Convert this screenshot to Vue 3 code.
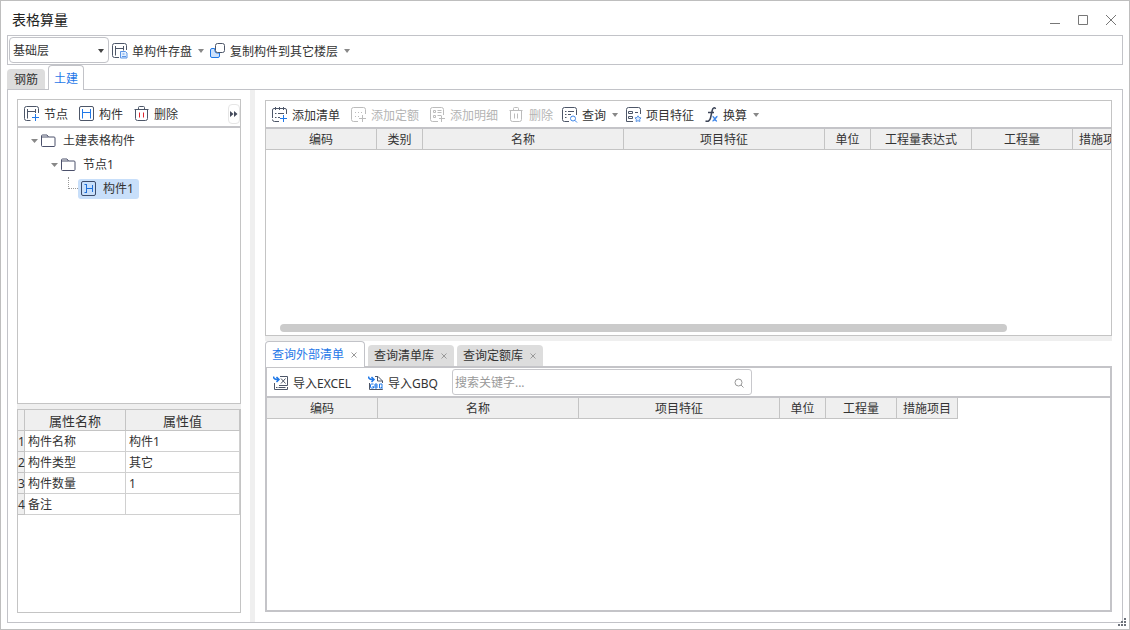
<script setup>
import { ref } from 'vue'

const floor = ref('基础层')
const keyword = ref('')
const leftTools = [
  { icon: 'node', label: '节点' },
  { icon: 'part', label: '构件' },
  { icon: 'trash-red', label: '删除' },
]
const listTools = [
  { icon: 'add-list', label: '添加清单' },
  { icon: 'add-quota', label: '添加定额', disabled: true },
  { icon: 'add-detail', label: '添加明细', disabled: true },
  { icon: 'trash', label: '删除', disabled: true, tight: true },
  { icon: 'query', label: '查询', drop: true },
  { icon: 'feature', label: '项目特征', tight: true },
  { icon: 'fx', label: '换算', drop: true },
]
const listColumns = [
  { label: '编码', width: 111 },
  { label: '类别', width: 46 },
  { label: '名称', width: 201 },
  { label: '项目特征', width: 201 },
  { label: '单位', width: 46 },
  { label: '工程量表达式', width: 101 },
  { label: '工程量', width: 101 },
  { label: '措施项目', width: 61 },
]
const queryColumns = [
  { label: '编码', width: 111 },
  { label: '名称', width: 201 },
  { label: '项目特征', width: 201 },
  { label: '单位', width: 46 },
  { label: '工程量', width: 71 },
  { label: '措施项目', width: 61 },
]
const queryTabs = ['查询外部清单', '查询清单库', '查询定额库']
const activeTab = ref('查询外部清单')
const properties = [
  ['构件名称', '构件1'],
  ['构件类型', '其它'],
  ['构件数量', '1'],
  ['备注', ''],
]
const total = (columns) => columns.reduce((sum, c) => sum + c.width, 0)
</script>

<template>
  <div class="window">
    <svg class="defs" aria-hidden="true">
      <symbol id="save" viewBox="0 0 16 16" fill="none">
        <path d="M7 14.5H2.5a2 2 0 0 1-2-2v-10a2 2 0 0 1 2-2h10a2 2 0 0 1 2 2V7M3.5 3v9.5M3.5 5.5h8M11.500 3v4.500" stroke="#4d5668" />
        <path d="M8.500 8.500h5l1.500 1.500v5H8.500z" stroke="#5b95e6" fill="#e3effe" />
        <path d="M10 13.500h4M10.500 11h2" stroke="#5b95e6" />
      </symbol>
      <symbol id="copy" viewBox="0 0 16 16" fill="none">
        <path d="M4.500 5.500H2A1.500 1.500 0 0 0 0.500 7v6A1.500 1.500 0 0 0 2 14.500h6A1.500 1.500 0 0 0 9.500 13V10H7a2 2 0 0 1-2-2z" stroke="#1f78e8" fill="#cfe2fb" />
        <rect x="5.500" y="0.500" width="9" height="9" rx="2" stroke="#4d5668" fill="#fff" />
      </symbol>
      <symbol id="node" viewBox="0 0 16 16" fill="none">
        <path d="M6.500 14.500h-4a2 2 0 0 1-2-2v-10a2 2 0 0 1 2-2h10a2 2 0 0 1 2 2V7M3.500 3v9.500M3.500 5.500h8M11.500 3v4" stroke="#4d5668" />
        <path d="M8 11.500h7M11.500 8v7" stroke="#1f78e8" />
      </symbol>
      <symbol id="part" viewBox="0 0 16 16" fill="none">
        <rect x="0.500" y="0.500" width="14" height="14" rx="1.500" stroke="#4d5668" />
        <path d="M3.500 3v9.500M11.500 3v9.500M3.500 6.500h8" stroke="#1f78e8" />
      </symbol>
      <symbol id="tree-part" viewBox="0 0 16 16" fill="none">
        <rect x="0.500" y="0.500" width="14" height="14" rx="1.500" stroke="#3c4c6b" />
        <path d="M5.500 3v9M3.500 3.500h2M3.500 11.500h2M5.500 7.500h6M11.500 4v7" stroke="#1f6fd8" />
      </symbol>
      <symbol id="trash-red" viewBox="0 0 16 16" fill="none">
        <path d="M0.500 3.500h14M4.500 3V1.500a1 1 0 0 1 1-1h4a1 1 0 0 1 1 1V3M1.500 3.500v9a2 2 0 0 0 2 2h8a2 2 0 0 0 2-2v-9" stroke="#4d5668" />
        <path d="M5.500 6.500v5M9.500 6.500v5" stroke="#e0262f" />
      </symbol>
      <symbol id="trash" viewBox="0 0 16 16" fill="none">
        <path d="M0.500 3.500h13M4.500 3V1.500a1 1 0 0 1 1-1h3a1 1 0 0 1 1 1V3M1.500 3.500v9a2 2 0 0 0 2 2h7a2 2 0 0 0 2-2v-9M5.500 6.500v5M8.500 6.500v5" stroke="#bcbcbc" />
      </symbol>
      <symbol id="add-list" viewBox="0 0 16 16" fill="none">
        <path d="M7 14.500H2.500a2 2 0 0 1-2-2M0.500 11V3a1.500 1.500 0 0 1 1.500-1.500h11A1.500 1.500 0 0 1 14.500 3v4M3.500 0v3M7.500 0v3M11.500 0v3M3 6.500h1.500M6 6.500h6M3 10.500h1.500M6 10.500h2" stroke="#4d5668" />
        <path d="M8 11.500h7M11.500 8v7" stroke="#1f78e8" />
      </symbol>
      <symbol id="add-quota" viewBox="0 0 16 16" fill="none">
        <path d="M7 14.500H2.500a2 2 0 0 1-2-2v-10a2 2 0 0 1 2-2h10a2 2 0 0 1 2 2V7M8 11.500h7M11.500 8v7" stroke="#bcbcbc" />
        <path d="M4 5.500h1M7 5.500h1M10 5.500h1M4 9.500h1M7 9.500h1" stroke="#bcbcbc" />
      </symbol>
      <symbol id="add-detail" viewBox="0 0 16 16" fill="none">
        <path d="M8 14.500H2.500a2 2 0 0 1-2-2v-10a2 2 0 0 1 2-2h9a2 2 0 0 1 2 2V8M9 11.500h6M11.500 9v6M3.500 3.500h2v2h-2zM3.500 8.500h2v2h-2zM7.500 3.500h4M7.500 5.500h4M7.500 8.500h4" stroke="#bcbcbc" />
      </symbol>
      <symbol id="query" viewBox="0 0 16 16" fill="none">
        <path d="M7 14.500H2.500a2 2 0 0 1-2-2v-10a2 2 0 0 1 2-2h10a2 2 0 0 1 2 2V8M3 4.500h1.500M6 4.500h6M3 7.500h1.500M6 7.500h3M3 10.500h1.500" stroke="#4d5668" />
        <path d="M13.500 11.500a2.500 2.500 0 1 1-5 0a2.500 2.500 0 0 1 5 0zM12.800 13.300l2.200 2.200" stroke="#3f87ea" />
      </symbol>
      <symbol id="feature" viewBox="0 0 16 16" fill="none">
        <path d="M7 14.500H0.500v-12a2 2 0 0 1 2-2h10a2 2 0 0 1 2 2V7M2.500 4.500h4v2h-4zM2.500 9.500h4v2h-4zM9 5.500h3" stroke="#4d5668" />
        <path d="M12 8.800l1 1.700 2 .4-1.300 1.500.2 2.100-1.900-.8-1.900.8.200-2.100L9 10.900l2-.4z" stroke="#5b95e6" fill="#dcebff" />
      </symbol>
      <symbol id="fx" viewBox="0 0 16 16" fill="none">
        <path d="M12.500 2C11.800 0 9.800 .6 9.200 3.500L7.500 11C6.800 14 4.800 15 2.500 13.800M5 5.500h6" stroke="#3c4457" stroke-width="1.500" />
        <path d="M9.500 9.500c2-.5 2 5 4.500 4.500M14.500 9.500c-1.800-.2-2.700 4.700-5 4.300" stroke="#3f87ea" stroke-width="1.500" />
      </symbol>
      <symbol id="folder" viewBox="0 0 16 16" fill="none">
        <path d="M1.500 13.500a1 1 0 0 1-1-1v-9.500a1 1 0 0 1 1-1h4.500l1.500 2h5.500a1 1 0 0 1 1 1v7.500a1 1 0 0 1-1 1zM1 4h6.500" stroke="#4b506b" />
      </symbol>
      <symbol id="excel" viewBox="0 0 16 16" fill="none">
        <path d="M7 1.500h7.500v9H6M1.500 8v6.500h13V12M3 12.500h1.500M5.500 12.500h7" stroke="#4d5668" />
        <path d="M8 3.500l4.500 5M12.500 3.500L8 8.500" stroke="#4d5668" />
        <path d="M0.500 1.500c0 2 1.500 3 4.500 3M3.500 2l2.500 2.500L3.500 7" stroke="#1f78e8" stroke-width="1.500" />
      </symbol>
      <symbol id="gbq" viewBox="0 0 16 16" fill="none">
        <path d="M7 1.500h3l4.500 4.500v8.500h-13V8M9.500 1.500V6h5" stroke="#4d5668" />
        <path d="M0.500 1.500c0 2 1.500 3 4.500 3M3.500 2l2.500 2.500L3.500 7" stroke="#1f78e8" stroke-width="1.500" />
        <rect x="2" y="8" width="13" height="6" fill="#fff" />
        <path d="M5.500 9H3.500a1 1 0 0 0-1 1v2a1 1 0 0 0 1 1h2v-1.500H4.500M7 11h2M7 9v4h2V9zM11.500 9h2.500v4h-2.500zM13 12l1.500 1.500" stroke="#1f78e8" />
      </symbol>
    </svg>

    <header class="titlebar">
      <h1>表格算量</h1>
      <div class="controls">
        <button aria-label="最小化"><svg viewBox="0 0 12 12"><path d="M1 9.500h10" /></svg></button>
        <button aria-label="最大化"><svg viewBox="0 0 12 12"><path d="M1.500 1.500h9v9h-9z" /></svg></button>
        <button aria-label="关闭"><svg viewBox="0 0 12 12"><path d="M1 1l10 10M11 1L1 11" /></svg></button>
      </div>
    </header>

    <div class="mainbar">
      <div class="select-wrap">
        <select v-model="floor" aria-label="楼层"><option>基础层</option></select>
        <i class="caret dark"></i>
      </div>
      <button class="tool"><svg class="icon"><use href="#save" /></svg><span>单构件存盘</span><i class="caret"></i></button>
      <button class="tool"><svg class="icon"><use href="#copy" /></svg><span>复制构件到其它楼层</span><i class="caret"></i></button>
    </div>

    <nav class="page-tabs">
      <button>钢筋</button>
      <button class="active">土建</button>
    </nav>

    <main class="workspace">
      <aside class="left">
        <section class="tree-pane">
          <div class="toolbar">
            <button v-for="t in leftTools" :key="t.icon" class="tool">
              <svg class="icon"><use :href="'#' + t.icon" /></svg><span>{{ t.label }}</span>
            </button>
            <button class="more" aria-label="更多"><svg viewBox="0 0 8 6"><path d="M0 0l3.500 3L0 6zM4 0l3.500 3L4 6z" /></svg></button>
          </div>
          <ul class="tree">
            <li>
              <div class="row"><i class="caret wide"></i><svg class="icon"><use href="#folder" /></svg><span>土建表格构件</span></div>
              <ul>
                <li>
                  <div class="row"><i class="caret wide"></i><svg class="icon"><use href="#folder" /></svg><span>节点1</span></div>
                  <ul>
                    <li>
                      <div class="row">
                        <i class="branch"></i>
                        <div class="selected"><svg class="icon"><use href="#tree-part" /></svg><span>构件1</span></div>
                      </div>
                    </li>
                  </ul>
                </li>
              </ul>
            </li>
          </ul>
        </section>
        <div class="hsplit"></div>
        <section class="props-pane">
          <table class="props">
            <colgroup><col class="c-num" /><col class="c-name" /><col /></colgroup>
            <thead><tr><th></th><th>属性名称</th><th>属性值</th></tr></thead>
            <tbody>
              <tr v-for="(p, i) in properties" :key="p[0]">
                <th>{{ i + 1 }}</th><td>{{ p[0] }}</td><td>{{ p[1] }}</td>
              </tr>
            </tbody>
          </table>
        </section>
      </aside>

      <div class="vsplit"></div>

      <div class="right">
        <section class="list-pane">
          <div class="toolbar">
            <button v-for="t in listTools" :key="t.icon" class="tool" :class="{ tight: t.tight }" :disabled="t.disabled">
              <svg class="icon"><use :href="'#' + t.icon" /></svg><span>{{ t.label }}</span><i v-if="t.drop" class="caret"></i>
            </button>
          </div>
          <table class="grid" :style="{ width: total(listColumns) + 'px' }">
            <thead>
              <tr><th v-for="c in listColumns" :key="c.label" :style="{ width: c.width + 'px' }">{{ c.label }}</th></tr>
            </thead>
          </table>
          <div class="scroll-thumb"></div>
        </section>
        <div class="hsplit"></div>
        <nav class="query-tabs">
          <button v-for="t in queryTabs" :key="t" :class="{ active: t === activeTab }" @click="activeTab = t">
            {{ t }}<svg viewBox="0 0 6 6"><path d="M0.500 0.500l5 5M5.500 0.500l-5 5" /></svg>
          </button>
        </nav>
        <section class="query-pane">
          <div class="toolbar">
            <button class="tool"><svg class="icon"><use href="#excel" /></svg><span>导入EXCEL</span></button>
            <button class="tool"><svg class="icon"><use href="#gbq" /></svg><span>导入GBQ</span></button>
            <div class="search">
              <input v-model="keyword" type="text" aria-label="搜索关键字" placeholder="搜索关键字..." />
              <svg viewBox="0 0 10 10"><circle cx="4.500" cy="4.500" r="3.500" /><path d="M7 7l2.500 2.500" /></svg>
            </div>
          </div>
          <table class="grid" :style="{ width: total(queryColumns) + 'px' }">
            <thead>
              <tr><th v-for="c in queryColumns" :key="c.label" :style="{ width: c.width + 'px' }">{{ c.label }}</th></tr>
            </thead>
          </table>
        </section>
      </div>
    </main>
    <svg class="grip" viewBox="0 0 8 8"><path d="M6 0h2v2H6zM3 3h2v2H3zM6 3h2v2H6zM0 6h2v2H0zM3 6h2v2H3zM6 6h2v2H6z" /></svg>
  </div>
</template>

<style>
body { background: #fff; }
</style>

<style scoped>
* { box-sizing: border-box; }
.window {
  position: relative;
  display: flex;
  flex-direction: column;
  min-height: 100vh;
  padding: 0 6px 6px;
  border: 1px solid #bebebe;
  background: #fff;
  color: #333;
  font: 12px/16px "Noto Sans", "Noto Sans CJK SC", sans-serif;
}
.defs { position: absolute; width: 0; height: 0; }
button {
  margin: 0;
  padding: 0;
  border: 0;
  background: none;
  color: inherit;
  font: inherit;
  white-space: nowrap;
}
ul { margin: 0; padding: 0; list-style: none; }
.icon { width: 16px; height: 16px; flex: none; }
.titlebar {
  display: flex;
  justify-content: space-between;
  align-items: center;
  height: 34px;
  padding: 3px 6px 0 5px;
}
h1 { margin: 0; font-size: 14px; font-weight: 400; line-height: 20px; color: #222; }
.controls { display: flex; gap: 16px; }
.controls svg { display: block; width: 12px; height: 12px; fill: none; stroke: #777; }
.mainbar {
  display: flex;
  align-items: center;
  height: 30px;
  padding: 2px 0 0 1px;
  border: 1px solid #c2c3c8;
}
.select-wrap { position: relative; align-self: flex-start; width: 100px; margin: -1px 3px 0 0; }
select {
  display: block;
  width: 100%;
  height: 26px;
  padding: 1px 3px 0;
  border: 1px solid #c2c3c8;
  border-radius: 4px;
  background: #fff;
  color: #333;
  font: inherit;
  appearance: none;
}
.caret {
  flex: none;
  width: 6px;
  height: 4px;
  margin-left: 2px;
  background: #888;
  clip-path: polygon(0 0, 100% 0, 50% 100%);
}
.caret.dark { position: absolute; right: 5px; top: 12px; background: #444; }
.caret.wide { width: 7px; height: 4px; margin: 0 3px 0 0; }
.tool { display: flex; align-items: center; gap: 4px; }
.tool span { padding-top: 2px; }
.mainbar .tool { margin-right: 6px; }
.page-tabs { display: flex; align-items: flex-end; height: 24px; }
.page-tabs button {
  width: 38px;
  height: 20px;
  padding-top: 2px;
  border-radius: 4px 4px 0 0;
  background: #ddd;
}
.page-tabs .active {
  z-index: 1;
  width: 36px;
  height: 25px;
  margin: 0 0 -1px 3px;
  border: 1px solid #c2c3c8;
  border-bottom: 0;
  background: #fff;
  color: #1f78e8;
}
.workspace {
  flex: 1;
  display: flex;
  border: 1px solid #c2c3c8;
}
.left {
  display: flex;
  flex-direction: column;
  flex: none;
  width: 224px;
  margin: 9px;
}
.vsplit { flex: none; width: 5px; background: #efefef; }
.hsplit { flex: none; height: 5px; background: #efefef; }
.right {
  flex: 1;
  display: flex;
  flex-direction: column;
  min-width: 0;
  margin: 10px;
}
.tree-pane { flex: 1; border: 1px solid #c4c4c4; }
.toolbar {
  display: flex;
  align-items: center;
  height: 28px;
  padding: 2px 0 0 6px;
  border-bottom: 2px solid #c4c4c8;
}
.left .tool { margin-right: 11px; }
.more {
  width: 12px;
  height: 20px;
  margin-left: auto;
  border: 1px solid #e6e6e6;
  border-radius: 4px;
}
.more svg { display: block; width: 8px; height: 6px; margin-left: 1px; fill: #444b5c; }
.tree { padding: 1px 0 0 13px; }
.tree ul { padding-left: 20px; }
.row { display: flex; align-items: center; height: 24px; }
.row span { margin-left: 6px; }
.branch {
  width: 10px;
  height: 12px;
  margin: 0 0 12px -3px;
  border: 1px dotted #999;
  border-width: 0 0 1px 1px;
}
.selected {
  display: flex;
  align-items: center;
  height: 20px;
  padding: 0 5px 0 3px;
  border-radius: 3px;
  background: #c8dffa;
}
.props-pane { height: 204px; border: 1px solid #c4c4c4; }
table { border-collapse: separate; border-spacing: 0; table-layout: fixed; }
.props { width: 100%; }
.c-num { width: 7px; }
.c-name { width: 101px; }
.props th, .props td {
  height: 21px;
  padding: 2px 0 0 3px;
  border: solid #d0d0d0;
  border-width: 0 1px 1px 0;
  text-align: left;
  font-weight: 400;
  white-space: nowrap;
}
.props th { padding-left: 0; border-color: #c4c4c4; background: #efefef; }
.props thead th { text-align: center; font-size: 13px; }
.list-pane {
  display: flex;
  flex-direction: column;
  flex: none;
  height: 236px;
  border: 1px solid #c4c4c4;
  overflow: hidden;
}
.right .tool { margin-right: 11px; }
.right .tight { margin-right: 9px; }
.right .tool:has(.caret) { margin-right: 8px; }
.tool:disabled { color: #b4b4b4; }
.grid th {
  height: 21px;
  padding: 2px 0 0;
  border: solid #c4c4c4;
  border-width: 0 1px 1px 0;
  background: #efefef;
  font-weight: 400;
  white-space: nowrap;
}
.scroll-thumb {
  width: 86%;
  height: 8px;
  margin: auto 0 3px 14px;
  border-radius: 4px;
  background: #cbcbcb;
}
.query-tabs { display: flex; align-items: flex-end; gap: 3px; height: 25px; }
.query-tabs button {
  display: flex;
  align-items: center;
  gap: 7px;
  height: 21px;
  padding: 1px 7px 0 6px;
  border-radius: 4px 4px 0 0;
  background: #ddd;
}
.query-tabs .active {
  z-index: 1;
  height: 26px;
  margin-bottom: -1px;
  border: 1px solid #c2c3c8;
  border-bottom: 0;
  background: #fff;
  color: #1f78e8;
}
.query-tabs svg { width: 6px; height: 6px; fill: none; stroke: #999; }
.query-pane { flex: 1; border: 2px solid #c4c4c8; }
.query-pane .toolbar { height: 30px; }
.query-pane .tool { margin-right: 17px; }
.query-pane .tool:has(+ .search) { margin-right: 14px; }
.search { position: relative; align-self: flex-start; width: 300px; margin-top: -1px; }
.search input {
  display: block;
  width: 100%;
  height: 26px;
  padding: 1px 24px 0 2px;
  border: 1px solid #c8c8cc;
  border-radius: 3px;
  color: #333;
  font: inherit;
}
.search input::placeholder { color: #999; }
.search svg {
  position: absolute;
  top: 9px;
  right: 8px;
  width: 10px;
  height: 10px;
  fill: none;
  stroke: #999;
}
.grip { position: absolute; right: 3px; bottom: 3px; width: 8px; height: 8px; fill: #6d727a; }
</style>
